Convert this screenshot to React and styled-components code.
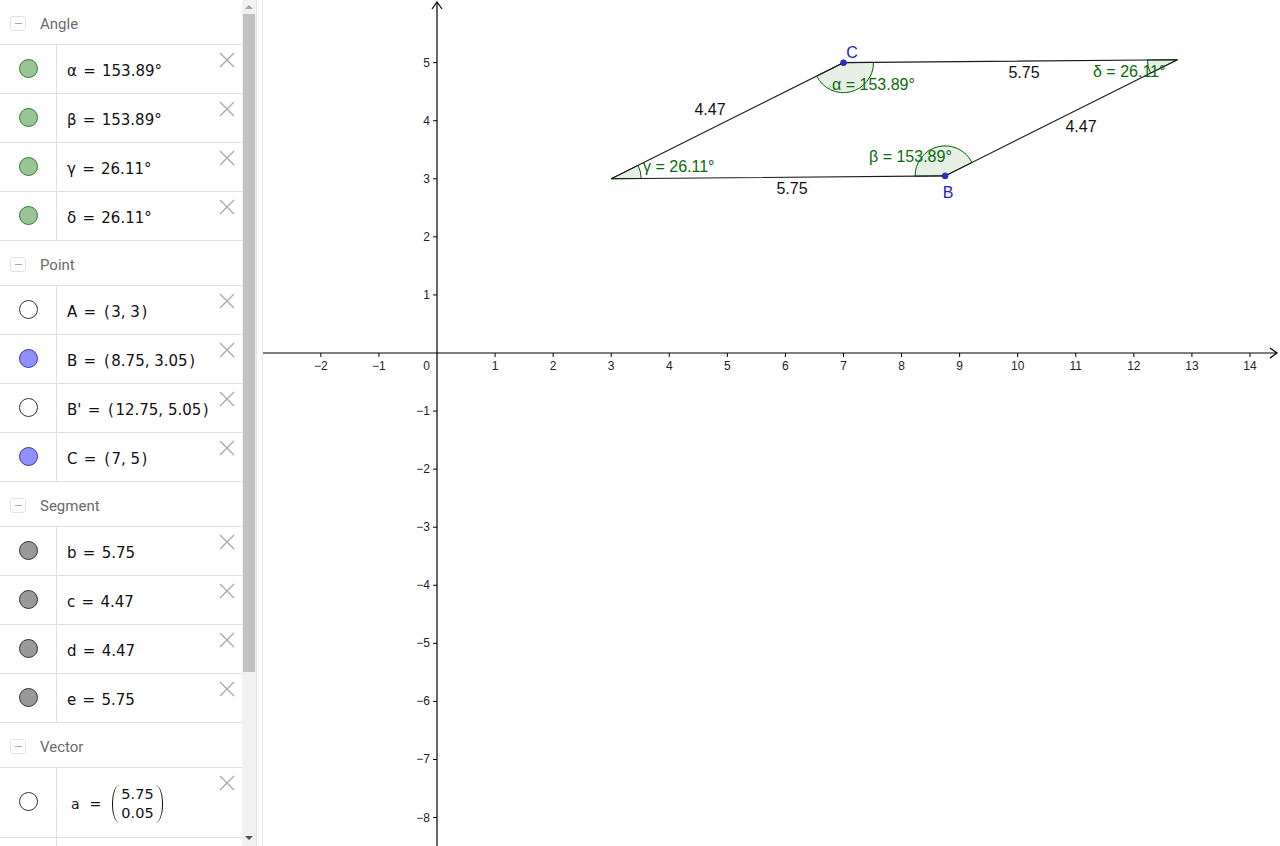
import React from "react";
import styled, { createGlobalStyle } from "styled-components";

const GlobalStyle = createGlobalStyle`
  html, body {
    margin: 0;
    padding: 0;
    overflow: hidden;
    background: #fff;
  }
`;

const Page = styled.div`
  display: flex;
  width: 1280px;
  height: 846px;
  overflow: hidden;
  font-family: "DejaVu Sans", sans-serif;
`;

const Sidebar = styled.div`
  width: 242px;
  flex: none;
  display: flex;
  flex-direction: column;
  overflow: hidden;
  background: #fff;
`;

const SectionHeader = styled.div`
  height: 45px;
  flex: none;
  display: flex;
  align-items: center;
  padding-left: 10px;
  padding-top: 4px;
  box-sizing: border-box;
  border-bottom: 1px solid #e0e0e0;
`;

const CollapseBox = styled.span`
  width: 14px;
  height: 13px;
  margin-top: -2px;
  border: 1px solid #e4e4e4;
  border-radius: 3px;
  display: flex;
  align-items: center;
  justify-content: center;
  &::before {
    content: "";
    width: 7px;
    height: 1px;
    background: #aaa;
  }
`;

const SectionTitle = styled.span`
  margin-left: 14px;
  font-family: Roboto, "Liberation Sans", sans-serif;
  font-size: 15px;
  color: #6a6a6a;
`;

const Row = styled.div`
  height: ${(p) => (p.$tall ? 70 : 49)}px;
  flex: none;
  display: flex;
  box-sizing: border-box;
  border-bottom: 1px solid #e0e0e0;
  position: relative;
`;

const MarkerCell = styled.div`
  width: 57px;
  flex: none;
  display: flex;
  align-items: center;
  justify-content: center;
  border-right: 1px solid #e0e0e0;
  padding-left: 1px;
  box-sizing: border-box;
`;

const Marker = styled.span`
  width: 17px;
  height: 17px;
  border-radius: 50%;
  background: ${(p) => p.$fill};
  border: 1px solid ${(p) => p.$border};
  margin-top: -2px;
`;

const Value = styled.div`
  flex: 1;
  display: flex;
  align-items: center;
  padding-left: 10px;
  padding-top: 3px;
  font-size: 15px;
  color: #111;
`;

const Formula = styled.span`
  white-space: pre;
`;

const Eq = styled.span`
  margin: 0 1.5px;
`;

const Paren = styled.span`
  padding: 0 1.5px;
`;

const DeleteButton = styled.svg`
  position: absolute;
  right: 7px;
  top: 7px;
`;

const VectorValue = styled.div`
  flex: 1;
  display: flex;
  align-items: center;
  padding-left: 14px;
  padding-top: 2px;
  font-size: 14px;
  color: #111;
  gap: 10px;
`;

const Matrix = styled.span`
  display: flex;
  flex-direction: column;
  align-items: center;
  position: relative;
  margin-left: 1px;
  padding: 0 9px;
  line-height: 19px;
  font-size: 14.5px;
  &::before,
  &::after {
    content: "";
    position: absolute;
    top: 0;
    bottom: 0;
    width: 7px;
    border: 0 solid #111;
  }
  &::before {
    left: 0;
    border-left-width: 1.4px;
    border-radius: 9px 0 0 9px / 50% 0 0 50%;
  }
  &::after {
    right: 0;
    border-right-width: 1.4px;
    border-radius: 0 9px 9px 0 / 0 50% 50% 0;
  }
`;

const Scrollbar = styled.div`
  width: 14px;
  flex: none;
  background: #f1f1f1;
  display: flex;
  flex-direction: column;
  align-items: center;
`;

const ScrollArrow = styled.span`
  width: 0;
  height: 0;
  flex: none;
  border-left: 4px solid transparent;
  border-right: 4px solid transparent;
  ${(p) =>
    p.$down
      ? "border-top: 4px solid #505050; margin-top: auto; margin-bottom: 6px;"
      : "border-bottom: 4px solid #a3a3a3; margin-top: 5px;"}
`;

const ScrollThumb = styled.span`
  width: 12px;
  height: 658px;
  margin-top: 5px;
  background: #c1c1c1;
`;

const Splitter = styled.div`
  width: 7px;
  flex: none;
  box-sizing: border-box;
  background: #fbfbfb;
  border-left: 1px solid #e6e6e6;
  border-right: 1px solid #e6e6e6;
`;

const Canvas = styled.div`
  flex: 1;
  background: #fff;
  svg {
    display: block;
  }
`;

const GREEN = { fill: "#99c495", border: "#2e7d32" };
const HOLLOW = { fill: "#fff", border: "#333" };
const BLUE = { fill: "#9090ff", border: "#3434b0" };
const GRAY = { fill: "#999", border: "#333" };

const sections = [
  {
    title: "Angle",
    items: [
      { name: "α", value: "153.89°", ...GREEN },
      { name: "β", value: "153.89°", ...GREEN },
      { name: "γ", value: "26.11°", ...GREEN },
      { name: "δ", value: "26.11°", ...GREEN },
    ],
  },
  {
    title: "Point",
    items: [
      { name: "A", coords: "3, 3", ...HOLLOW },
      { name: "B", coords: "8.75, 3.05", ...BLUE },
      { name: "B'", coords: "12.75, 5.05", ...HOLLOW },
      { name: "C", coords: "7, 5", ...BLUE },
    ],
  },
  {
    title: "Segment",
    items: [
      { name: "b", value: "5.75", ...GRAY },
      { name: "c", value: "4.47", ...GRAY },
      { name: "d", value: "4.47", ...GRAY },
      { name: "e", value: "5.75", ...GRAY },
    ],
  },
];

function CloseIcon() {
  return (
    <DeleteButton width="16" height="16" viewBox="0 0 16 16">
      <path d="M1 1L15 15M15 1L1 15" stroke="#aaa" strokeWidth="1.4" fill="none" />
    </DeleteButton>
  );
}

// graphics view
const U = 58.07;
const OX = 174;
const OY = 353;
const pt = (x, y) => [OX + x * U, OY - y * U];

const A = pt(3, 3);
const B = pt(8.75, 3.05);
const Bp = pt(12.75, 5.05);
const C = pt(7, 5);

const dir = (p, q) => (Math.atan2(-(q[1] - p[1]), q[0] - p[0]) * 180) / Math.PI;

function sector(v, from, to, r = 30) {
  let a1 = dir(v, from);
  let a2 = dir(v, to);
  while (a2 <= a1) a2 += 360;
  const rad = (a) => (a * Math.PI) / 180;
  const p1 = [v[0] + r * Math.cos(rad(a1)), v[1] - r * Math.sin(rad(a1))];
  const p2 = [v[0] + r * Math.cos(rad(a2)), v[1] - r * Math.sin(rad(a2))];
  const large = a2 - a1 > 180 ? 1 : 0;
  return `M${v[0]} ${v[1]} L${p1[0]} ${p1[1]} A${r} ${r} 0 ${large} 0 ${p2[0]} ${p2[1]} Z`;
}

const minus = (k) => (k < 0 ? "\u2212" + Math.abs(k) : String(k));

function Graphics() {
  const xs = [];
  for (let k = -2; k <= 14; k++) if (k !== 0) xs.push(k);
  const ys = [];
  for (let k = -8; k <= 5; k++) if (k !== 0) ys.push(k);

  const angles = [
    sector(C, A, Bp),
    sector(A, B, C),
    sector(B, Bp, A),
    sector(Bp, C, B),
  ];

  return (
    <svg width="1017" height="846" viewBox="0 0 1017 846">
      <g fontFamily='"Liberation Sans", Arial, sans-serif' fontSize="12" fill="#222">
        {xs.map((k) => (
          <g key={"x" + k}>
            <line x1={OX + k * U} y1={OY} x2={OX + k * U} y2={OY + 4} stroke="#000" />
            <text x={OX + k * U} y={OY + 17} textAnchor="middle">
              {minus(k)}
            </text>
          </g>
        ))}
        {ys.map((k) => (
          <g key={"y" + k}>
            <line x1={OX - 4} y1={OY - k * U} x2={OX} y2={OY - k * U} stroke="#000" />
            <text x={OX - 7} y={OY - k * U + 4} textAnchor="end">
              {minus(k)}
            </text>
          </g>
        ))}
        <text x={OX - 7} y={OY + 17} textAnchor="end">
          0
        </text>
      </g>

      <g stroke="#000" strokeWidth="1.2" fill="none">
        <line x1="0" y1={OY} x2="1014" y2={OY} />
        <path d={`M1007 ${OY - 5} L1014 ${OY} L1007 ${OY + 5}`} />
        <line x1={OX} y1="846" x2={OX} y2="2" />
        <path d={`M${OX - 5} 9 L${OX} 2 L${OX + 5} 9`} />
      </g>

      {angles.map((d, i) => (
        <path key={i} d={d} fill="rgba(0,100,0,0.1)" stroke="#006400" strokeWidth="1" />
      ))}

      <polygon
        points={[A, B, Bp, C].map((p) => p.join(",")).join(" ")}
        fill="none"
        stroke="#1a1a1a"
        strokeWidth="1.1"
      />

      <circle cx={B[0]} cy={B[1]} r="3" fill="#2d2dc8" stroke="#1a1a80" strokeWidth="0.6" />
      <circle cx={C[0]} cy={C[1]} r="3" fill="#2d2dc8" stroke="#1a1a80" strokeWidth="0.6" />

      <g fontFamily='"Liberation Sans", Arial, sans-serif' fontSize="16">
        <g fill="#2323c8" textAnchor="middle">
          <text x="589" y="58">C</text>
          <text x="685" y="198">B</text>
        </g>
        <g fill="#111" textAnchor="middle">
          <text x="447" y="115">4.47</text>
          <text x="529" y="194">5.75</text>
          <text x="761" y="78">5.75</text>
          <text x="818" y="132">4.47</text>
        </g>
        <g fill="#0b6a0b">
          <text x="569" y="90">α = 153.89°</text>
          <text x="606" y="162">β = 153.89°</text>
          <text x="380" y="172">γ = 26.11°</text>
          <text x="830" y="77">δ = 26.11°</text>
        </g>
      </g>
    </svg>
  );
}

function ItemValue({ item }) {
  return (
    <Value>
      <Formula>
        {item.name} <Eq>=</Eq>{" "}
        {item.coords ? (
          <>
            <Paren>(</Paren>
            {item.coords}
            <Paren>)</Paren>
          </>
        ) : (
          item.value
        )}
      </Formula>
    </Value>
  );
}

export default function App() {
  return (
    <Page>
      <GlobalStyle />
      <Sidebar>
        {sections.map((s) => (
          <React.Fragment key={s.title}>
            <SectionHeader>
              <CollapseBox />
              <SectionTitle>{s.title}</SectionTitle>
            </SectionHeader>
            {s.items.map((it) => (
              <Row key={it.name}>
                <MarkerCell>
                  <Marker $fill={it.fill} $border={it.border} />
                </MarkerCell>
                <ItemValue item={it} />
                <CloseIcon />
              </Row>
            ))}
          </React.Fragment>
        ))}
        <SectionHeader>
          <CollapseBox />
          <SectionTitle>Vector</SectionTitle>
        </SectionHeader>
        <Row $tall>
          <MarkerCell>
            <Marker $fill="#fff" $border="#333" />
          </MarkerCell>
          <VectorValue>
            <span>a</span>
            <span>=</span>
            <Matrix>
              <span>5.75</span>
              <span>0.05</span>
            </Matrix>
          </VectorValue>
          <CloseIcon />
        </Row>
        <Row>
          <MarkerCell />
        </Row>
      </Sidebar>
      <Scrollbar>
        <ScrollArrow />
        <ScrollThumb />
        <ScrollArrow $down />
      </Scrollbar>
      <Splitter />
      <Canvas>
        <Graphics />
      </Canvas>
    </Page>
  );
}
